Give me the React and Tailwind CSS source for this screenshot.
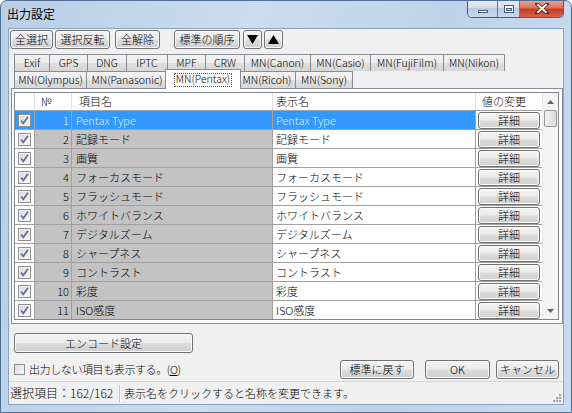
import React from "react";

const rows = [
  [1, "Pentax Type"],
  [2, "記録モード"],
  [3, "画質"],
  [4, "フォーカスモード"],
  [5, "フラッシュモード"],
  [6, "ホワイトバランス"],
  [7, "デジタルズーム"],
  [8, "シャープネス"],
  [9, "コントラスト"],
  [10, "彩度"],
  [11, "ISO感度"],
];

const tabs1 = [
  ["Exif", 36],
  ["GPS", 39],
  ["DNG", 40],
  ["IPTC", 42],
  ["MPF", 39],
  ["CRW", 40],
  ["MN(Canon)", 67],
  ["MN(Casio)", 61],
  ["MN(FujiFilm)", 74],
  ["MN(Nikon)", 62],
];

function Btn({ className = "", children }) {
  return (
    <div
      className={
        "flex items-center justify-center leading-none border border-[#707070] rounded-[3px] bg-[linear-gradient(#f4f4f4,#ebebeb_48%,#dddddd_52%,#cfcfcf)] shadow-[inset_0_0_0_1px_#fbfbfb] whitespace-nowrap " +
        className
      }
    >
      {children}
    </div>
  );
}

function Check({ checked = true }) {
  return (
    <div className="w-[13px] h-[13px] border border-[#8f8f8f] bg-[linear-gradient(135deg,#d9d9d9,#f7f7f7)] shadow-[inset_0_0_0_1px_#f4f4f4] flex items-center justify-center">
      {checked && (
        <svg width="11" height="11" viewBox="0 0 11 11">
          <path d="M2 5.5 L4.3 8.3 L9 1.8" fill="none" stroke="#5b6f98" strokeWidth="1.7" />
        </svg>
      )}
    </div>
  );
}

function Tab({ w, label, first }) {
  return (
    <div
      className={
        "h-[17px] border-t border-l border-r border-[#898c95] bg-[linear-gradient(#f3f3f3,#ebebeb_50%,#dedede_50%,#d7d7d7)] flex items-center justify-center text-[10.5px] leading-none whitespace-nowrap " +
        (first ? "" : "-ml-px")
      }
      style={{ width: w }}
    >
      {label}
    </div>
  );
}

export default function App() {
  return (
    <div className="w-[572px] h-[413px] overflow-hidden flex flex-col font-['Noto_Sans_CJK_JP','Noto_Sans',sans-serif] font-light text-black text-[11px] bg-[linear-gradient(100deg,#b9cfe7,#cadcef_40%,#bed3ea_70%,#c9dbee)] border border-[#4f6f92] rounded-t-[7px]">
      {/* Title bar */}
      <div className="h-[27px] flex items-start shrink-0">
        <div className="ml-[6px] mt-[7px] text-[12px] leading-none font-normal">出力設定</div>
        <div className="ml-auto mr-[7px] flex h-[18px] -mt-px border border-t-0 border-[#3d5e85] rounded-b-[5px] overflow-hidden">
          <div className="w-[30px] h-full flex items-end justify-center pb-[4px] bg-[linear-gradient(#e3ecf6,#d2deec_50%,#bccde1_50%,#c8d8ea)] border-r border-[#5a7aa0]">
            <div className="w-[10px] h-[3px] bg-white border border-[#465c78]" />
          </div>
          <div className="w-[22px] h-full flex items-center justify-center bg-[linear-gradient(#e3ecf6,#d2deec_50%,#bccde1_50%,#c8d8ea)] border-r border-[#5a7aa0]">
            <div className="w-[10px] h-[8px] border border-[#465c78] bg-white flex items-center justify-center">
              <div className="w-[6px] h-[3px] bg-[#c9d6e6] border border-[#465c78] mt-px" />
            </div>
          </div>
          <div className="w-[43px] h-full flex items-center justify-center bg-[linear-gradient(#e9a999,#d8735f_45%,#c63c26_55%,#d8634a)]">
            <svg width="14" height="11" viewBox="0 0 14 11">
              <path d="M2 1 L12 10 M12 1 L2 10" stroke="#5a1a10" strokeWidth="3.6" strokeLinecap="square" />
              <path d="M2.3 1.3 L11.7 9.7 M11.7 1.3 L2.3 9.7" stroke="#ffffff" strokeWidth="2" />
            </svg>
          </div>
        </div>
      </div>

      {/* Client area */}
      <div className="mx-[7px] h-[377px] shrink-0 bg-[#f0f0f0] border border-[#8aa3be] flex flex-col">
        {/* Toolbar */}
        <div className="mt-px h-[19px] flex items-stretch text-[11px] shrink-0">
          <Btn className="ml-px w-[43px]">全選択</Btn>
          <Btn className="ml-[2px] w-[55px]">選択反転</Btn>
          <Btn className="ml-[5px] w-[45px]">全解除</Btn>
          <Btn className="ml-[14px] w-[66px]">標準の順序</Btn>
          <Btn className="ml-[3px] w-[19px]">
            <svg width="11" height="9" viewBox="0 0 11 9">
              <polygon points="0,0 11,0 5.5,9" fill="#000" />
            </svg>
          </Btn>
          <Btn className="ml-[2px] w-[19px]">
            <svg width="11" height="9" viewBox="0 0 11 9">
              <polygon points="0,9 11,9 5.5,0" fill="#000" />
            </svg>
          </Btn>
        </div>

        {/* Tabs */}
        <div className="mt-[5px] ml-[5px] flex shrink-0">
          {tabs1.map(([l, w], i) => (
            <Tab key={l} label={l} w={w} first={i === 0} />
          ))}
        </div>
        <div className="ml-[5px] h-[17px] flex items-start shrink-0">
          <div className="h-[17px] w-[73px] border-t border-l border-r border-[#898c95] bg-[linear-gradient(#f3f3f3,#ebebeb_50%,#dedede_50%,#d7d7d7)] flex items-center justify-center text-[10.5px] leading-none whitespace-nowrap">
            MN(Olympus)
          </div>
          <div className="h-[17px] w-[82px] -ml-px border-t border-l border-r border-[#898c95] bg-[linear-gradient(#f3f3f3,#ebebeb_50%,#dedede_50%,#d7d7d7)] flex items-center justify-center text-[10.5px] leading-none whitespace-nowrap">
            MN(Panasonic)
          </div>
          <div className="relative z-10 -mt-[2px] h-[20px] w-[76px] -ml-[3px] border-t border-l border-r border-[#898c95] bg-white flex items-start justify-center pt-[3px] text-[10.5px] leading-none whitespace-nowrap">
            <span className="border border-dotted border-[#555] px-[1px] pb-[1px]">MN(Pentax)</span>
          </div>
          <div className="h-[17px] w-[58px] -ml-[3px] border-t border-l border-r border-[#898c95] bg-[linear-gradient(#f3f3f3,#ebebeb_50%,#dedede_50%,#d7d7d7)] flex items-center justify-center text-[10.5px] leading-none whitespace-nowrap">
            MN(Ricoh)
          </div>
          <div className="h-[17px] w-[58px] -ml-px border-t border-l border-r border-[#898c95] bg-[linear-gradient(#f3f3f3,#ebebeb_50%,#dedede_50%,#d7d7d7)] flex items-center justify-center text-[10.5px] leading-none whitespace-nowrap">
            MN(Sony)
          </div>
        </div>

        {/* Panel */}
        <div className="ml-[2px] w-[552px] h-[236px] shrink-0 border border-[#898c95] bg-[#fcfcfc] pt-[3px] pl-[2px]">
          <div className="w-[545px] h-[228px] border border-[#828790] bg-white flex">
            <div className="w-[527px] h-full overflow-hidden flex flex-col">
              {/* Header */}
              <div className="h-[18px] shrink-0 flex border-b border-[#a0a0a0] text-[11px] leading-none">
                <div className="w-[20px] border-r border-[#e3e3e3]" />
                <div className="w-[37px] border-r border-[#e3e3e3] flex items-center pl-[6px]">№</div>
                <div className="w-[201px] border-r border-[#e3e3e3] flex items-center pl-[7px]">項目名</div>
                <div className="w-[203px] border-r border-[#e3e3e3] flex items-center pl-[3px]">表示名</div>
                <div className="w-[66px] flex items-center pl-[6px]">値の変更</div>
              </div>
              {rows.map(([n, name]) => {
                const sel = n === 1;
                return (
                  <div key={n} className="h-[19px] shrink-0 flex text-[11px] leading-none">
                    <div className={"w-[20px] border-r border-b border-[#a0a0a0] flex items-center justify-center " + (sel ? "bg-[#3399ff]" : "bg-white")}>
                      <Check />
                    </div>
                    <div className={"w-[37px] border-r border-b border-[#a0a0a0] flex items-center justify-end pr-[2px] " + (sel ? "bg-[#3399ff] text-[#dcedff]" : "bg-[#c3c3c3]")}>
                      {n}
                    </div>
                    <div className={"w-[201px] border-r border-b border-[#a0a0a0] flex items-center pl-[4px] whitespace-nowrap " + (sel ? "bg-[#3399ff] text-[#dcedff]" : "bg-[#c3c3c3]")}>
                      {name}
                    </div>
                    <div className={"w-[203px] border-r border-b border-[#a0a0a0] flex items-center pl-[3px] whitespace-nowrap " + (sel ? "bg-[#3399ff] text-[#dcedff]" : "bg-white")}>
                      {name}
                    </div>
                    <div className="w-[66px] border-b border-[#a0a0a0] bg-white flex items-center justify-center">
                      <Btn className="w-[62px] h-[17px] text-[11px]">詳細</Btn>
                    </div>
                  </div>
                );
              })}
            </div>
            {/* Scrollbar */}
            <div className="w-[16px] h-full bg-[#f4f4f4] border-l border-[#e8e8e8] flex flex-col items-center">
              <div className="h-[17px] w-full flex items-center justify-center">
                <svg width="7" height="4" viewBox="0 0 7 4">
                  <polygon points="0,4 7,4 3.5,0" fill="#606060" />
                </svg>
              </div>
              <div className="w-[13px] h-[17px] border border-[#979797] rounded-[2px] bg-[linear-gradient(90deg,#f2f2f2,#e6e6e6_50%,#d8d8d8)]" />
              <div className="mt-auto h-[17px] w-full flex items-center justify-center">
                <svg width="7" height="4" viewBox="0 0 7 4">
                  <polygon points="0,0 7,0 3.5,4" fill="#606060" />
                </svg>
              </div>
            </div>
          </div>
        </div>

        {/* Encode button */}
        <Btn className="mt-[9px] ml-[5px] w-[179px] h-[20px] shrink-0">エンコード設定</Btn>

        {/* Bottom row */}
        <div className="mt-[7px] h-[19px] shrink-0 flex items-center">
          <div className="ml-[5px] w-[11px] h-[11px] border border-[#8e8f8f] bg-[linear-gradient(135deg,#dedede,#f8f8f8)]" />
          <div className="ml-[4px] leading-none tracking-[-0.4px] whitespace-nowrap">
            出力しない項目も表示する。(<span className="underline">O</span>)
          </div>
          <Btn className="ml-auto w-[74px] h-[19px]">標準に戻す</Btn>
          <Btn className="ml-[11px] w-[65px] h-[19px]">OK</Btn>
          <Btn className="ml-[6px] mr-[4px] w-[63px] h-[19px]">キャンセル</Btn>
        </div>

        {/* Status bar */}
        <div className="mt-[2px] flex-1 border-t border-[#d5d5d5] flex items-center relative leading-none">
          <div className="w-[110px] pl-[1px] whitespace-nowrap text-[12px]">選択項目：162/162</div>
          <div className="h-[17px] border-l border-[#c5c5c5] border-r-white border-r" />
          <div className="ml-[3px] whitespace-nowrap text-[11px]">表示名をクリックすると名称を変更できます。</div>
          <svg className="absolute right-[1px] bottom-[1px]" width="10" height="10" viewBox="0 0 10 10">
            <g fill="#a0a0a0">
              <rect x="7" y="1" width="2" height="2" />
              <rect x="4" y="4" width="2" height="2" />
              <rect x="7" y="4" width="2" height="2" />
              <rect x="1" y="7" width="2" height="2" />
              <rect x="4" y="7" width="2" height="2" />
              <rect x="7" y="7" width="2" height="2" />
            </g>
          </svg>
        </div>
      </div>
    </div>
  );
}
